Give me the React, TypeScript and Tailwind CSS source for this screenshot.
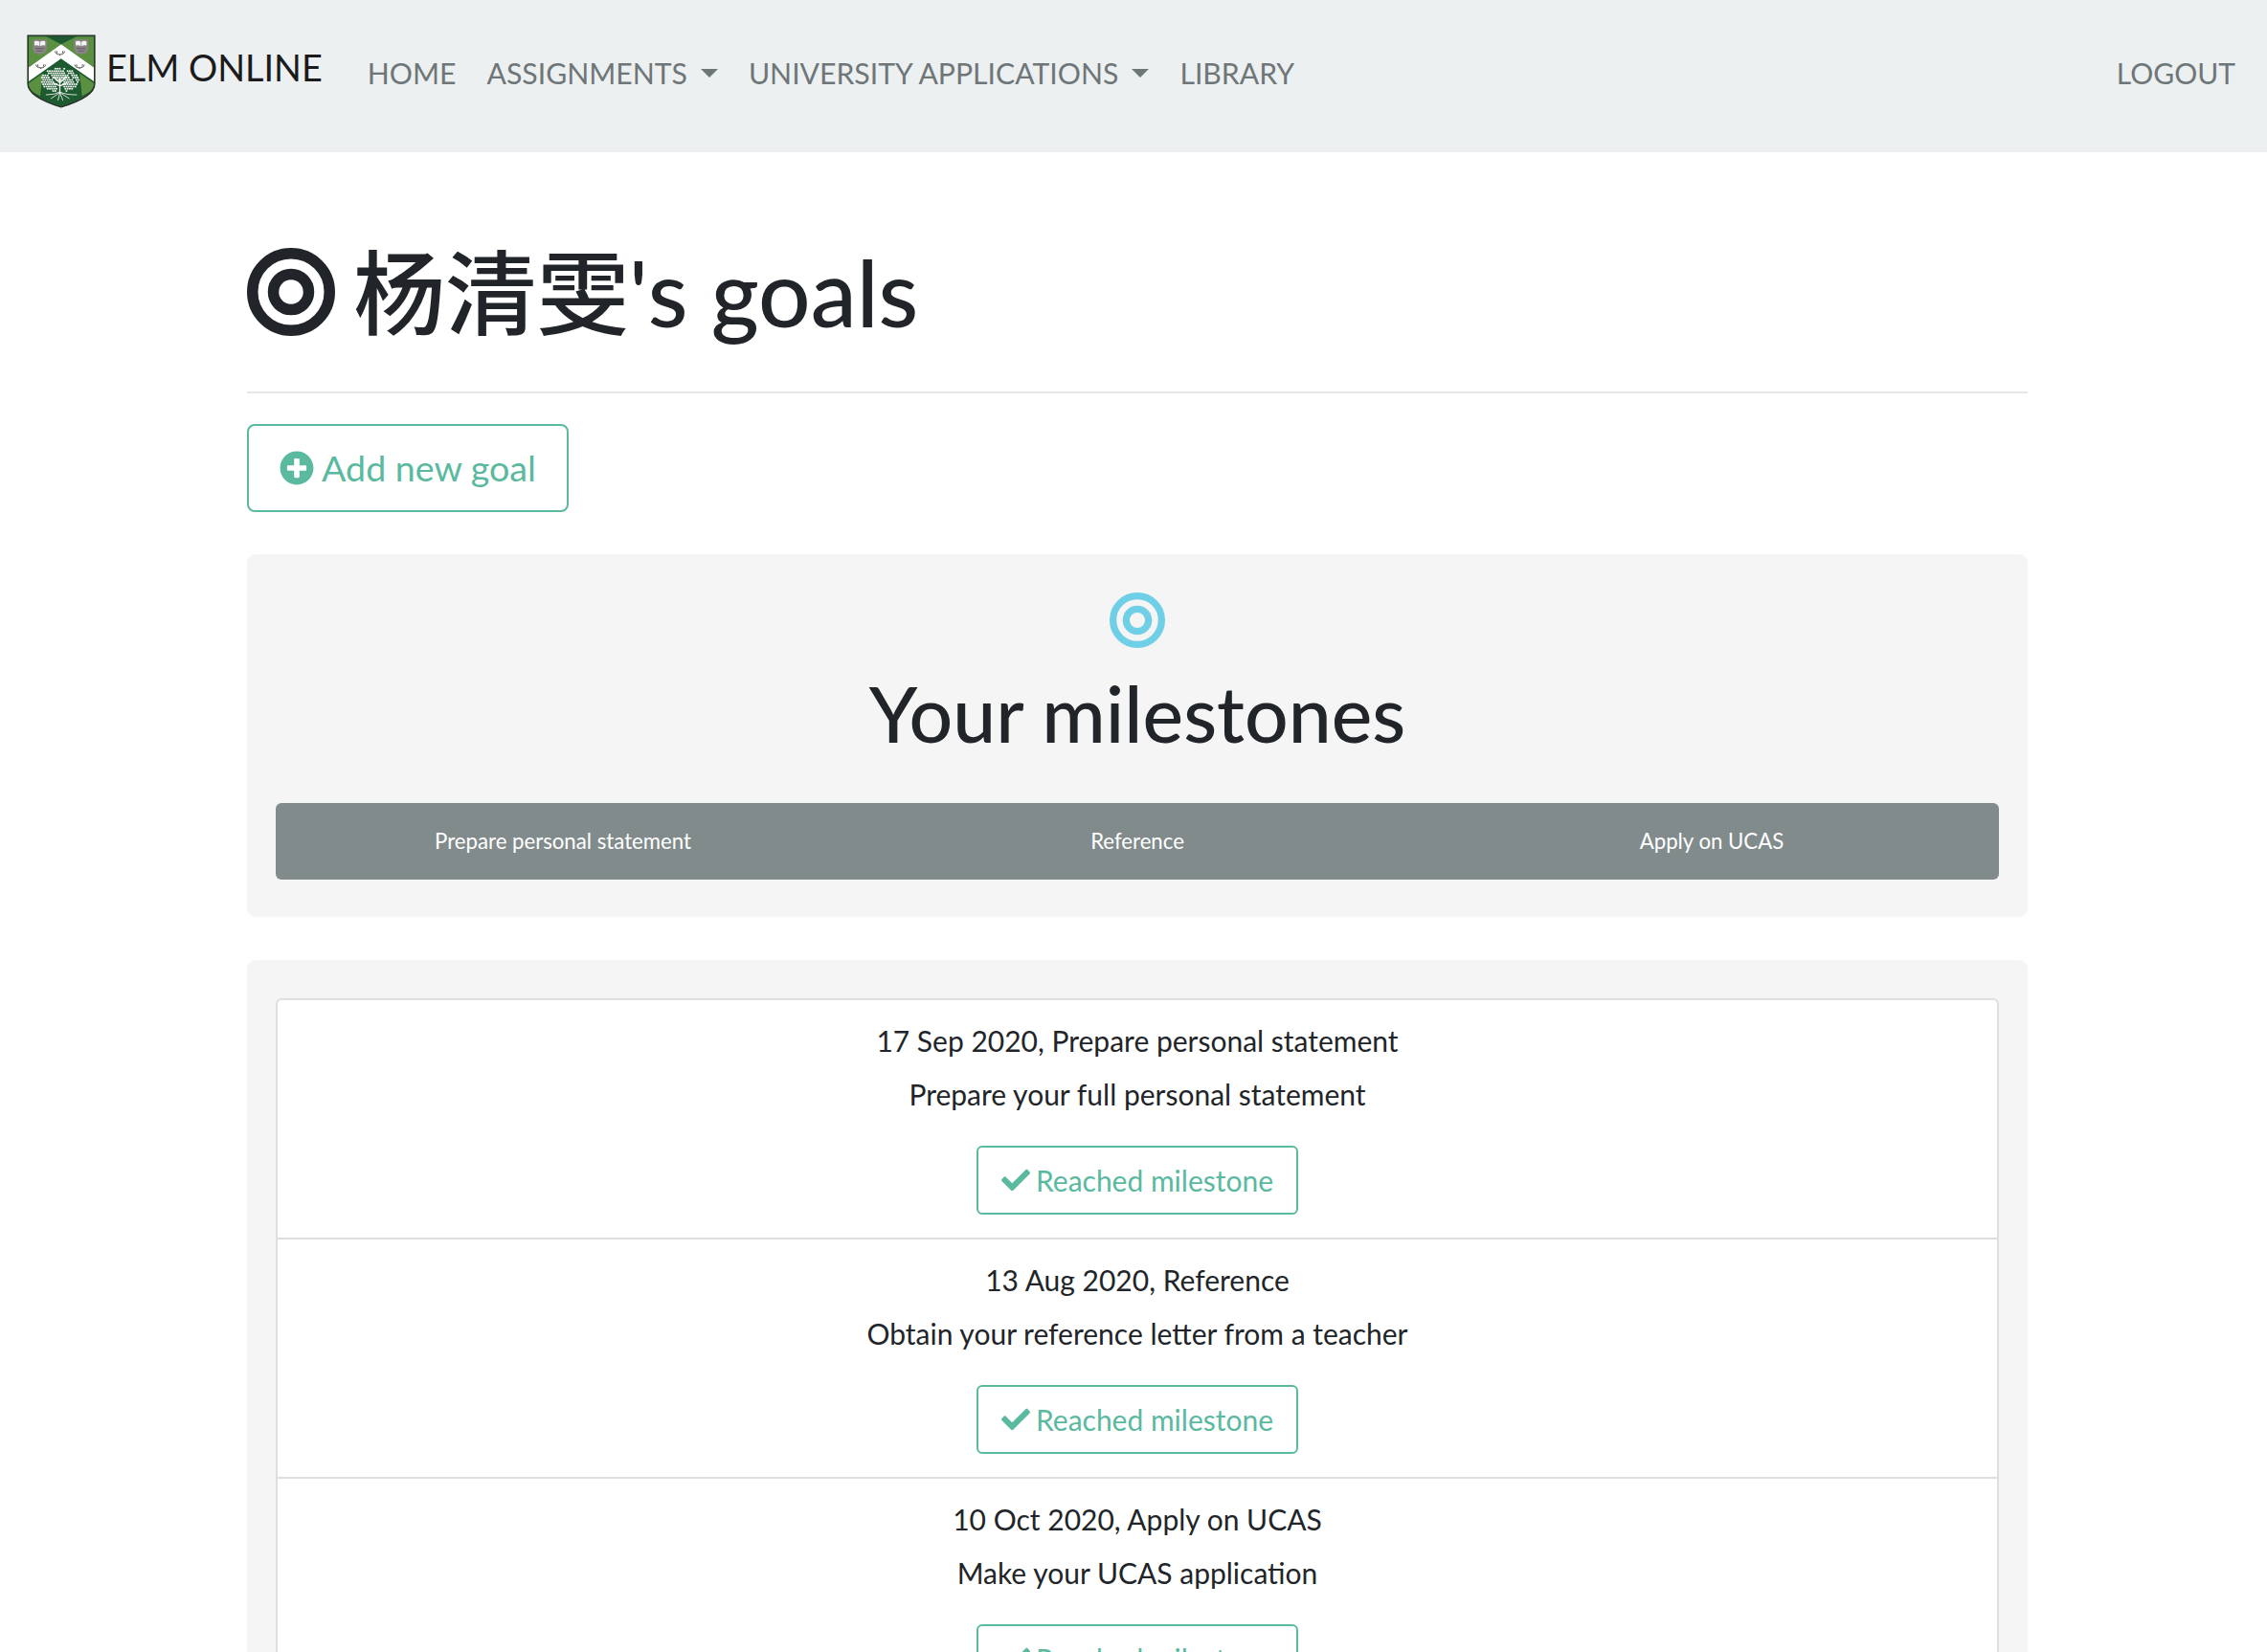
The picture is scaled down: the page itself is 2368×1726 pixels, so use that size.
import React from "react";
import { FaCheck, FaPlusCircle } from "react-icons/fa";

const font = { fontFamily: 'Lato, "Noto Sans CJK SC", sans-serif' };

function Bullseye({ className }: { className: string }) {
  return (
    <svg viewBox="0 0 96 96" className={className} fill="none" stroke="currentColor">
      <circle cx="48" cy="48" r="42" strokeWidth="12" />
      <circle cx="48" cy="48" r="19.3" strokeWidth="12" />
    </svg>
  );
}

function Owl({ x }: { x: number }) {
  return (
    <g>
      <path d={`M${x} 40h44v28c0 12-10 18-22 18s-22-6-22-18z`} fill="#8a8486" />
      <path d={`M${x + 5} 46q8-4 17 2q9-6 17-2v13q-8-3-17 2q-9-5-17-2z`} fill="#f4f4f4" />
      <path d={`M${x + 22} 48v13`} stroke="#555" strokeWidth="1.5" />
      <path d={`M${x + 8} 68h28M${x + 12} 76h20`} stroke="#5f5a5c" strokeWidth="2.5" />
    </g>
  );
}

function Antler({ x, y }: { x: number; y: number }) {
  return <path d={`M${x - 15} ${y - 6}q1 10 15 10q14 0 15-10M${x - 8} ${y}l-2-7M${x + 8} ${y}l2-7M${x} ${y + 4}v4`} stroke="#3a3a36" strokeWidth="2.5" fill="none" />;
}

function Logo() {
  const dots = [];
  for (let row = 0; row < 11; row++) {
    for (let col = 0; col < 17; col++) {
      const x = 72 + col * 7 + (row % 2) * 3.5;
      const y = 132 + row * 7;
      const dx = (x - 128) / 60;
      const dy = (y - 168) / 38;
      const gap = (row * 7 + col * 11) % 9 === 0 || (y > 172 && Math.abs(x - 128) < 10);
      if (dx * dx + dy * dy <= 1 && !gap) dots.push(<circle key={`${row}-${col}`} cx={x} cy={y} r="3.1" fill="#f7f7f7" />);
    }
  }
  return (
    <svg viewBox="24 24 217 232" className="w-[72px] h-[77px] shrink-0">
      <path d="M27 27H238V180C238 215 175 240 132 253C90 240 27 215 27 180Z" fill="#1d5a2f" stroke="#2b2522" strokeWidth="3.5" />
      <path d="M30 31H85L132 55L30 128ZM235 31H180L132 55L235 128Z" fill="#5a9040" />
      <path d="M30 178L74 146L66 218C45 208 30 195 30 180ZM235 178L190 146L198 218C220 208 235 195 235 180Z" fill="#5a9040" />
      <path d="M30 128L132 55L235 128V172L132 100L30 172Z" fill="#fff" />
      <Owl x={43} />
      <Owl x={173} />
      <Antler x={128} y={83} />
      <Antler x={68} y={125} />
      <Antler x={190} y={125} />
      {dots}
      <path d="M128 160V208M128 176L108 158M128 176L150 156M128 186L105 176M128 186L152 176" stroke="#f7f7f7" strokeWidth="4" fill="none" />
      <path d="M128 205Q112 214 84 214M128 205Q146 214 182 214M128 207L100 226M128 207L158 226M128 208L122 232M128 208L138 232" stroke="#f7f7f7" strokeWidth="2.5" fill="none" />
    </svg>
  );
}

function Caret() {
  return <span className="inline-block ml-[14px] w-0 h-0 border-x-[9px] border-x-transparent border-t-[9px] border-t-[#6f7678]" />;
}

function MilestoneItem({ title, desc, last }: { title: string; desc: string; last?: boolean }) {
  return (
    <div className={`flex flex-col items-center pt-[20px] h-[250px] text-[30px] leading-[45px] text-[#212529] ${last ? "" : "border-b-2 border-[#dfdfdf]"}`}>
      <p className="mb-[11px]">{title}</p>
      <p className="mb-[31px]">{desc}</p>
      <button className="flex items-center justify-center w-[336px] h-[72px] shrink-0 border-2 border-[#5ab99f] rounded-[6px] text-[#5ab99f] text-[30px]">
        <FaCheck className="w-[30px] h-[30px] mr-[6px]" />
        Reached milestone
      </button>
    </div>
  );
}

export default function App() {
  return (
    <div className="h-[1726px] overflow-hidden bg-white" style={font}>
      <nav className="flex items-center h-[159px] bg-[#ecf0f1] pl-[28px] pr-[33px] pb-[6px]">
        <div className="flex items-center -mt-[4px]">
          <Logo />
          <span className="ml-[11px] pb-[6px] text-[37.8px] text-[#1b1b1b]">ELM ONLINE</span>
        </div>
        <div className="flex items-center ml-[47px] gap-[32px] text-[30.2px] text-[#6f7678]">
          <span>HOME</span>
          <span className="flex items-center">ASSIGNMENTS<Caret /></span>
          <span className="flex items-center">UNIVERSITY APPLICATIONS<Caret /></span>
          <span>LIBRARY</span>
        </div>
        <span className="ml-auto text-[30px] text-[#6f7678]">LOGOUT</span>
      </nav>

      <main className="w-[1860px] ml-[258px]">
        <h1 className="flex items-center pt-[90px] h-[252px] text-[96px] font-medium text-[#212529] pb-[50px]">
          <Bullseye className="w-[92px] h-[92px] mr-[19px] text-[#212529]" />
          <span>杨清雯's goals</span>
        </h1>
        <hr className="border-t-2 border-[#e7e7e7] mt-[-2px]" />
        <button className="flex items-center justify-center mt-[32px] w-[336px] h-[92px] border-2 border-[#5ab99f] rounded-[8px] text-[#5ab99f] text-[37.6px]">
          <FaPlusCircle className="w-[36px] h-[36px] mr-[8px]" />
          Add new goal
        </button>

        <section className="mt-[44px] h-[379px] bg-[#f5f5f5] rounded-[9px] px-[30px] flex flex-col items-center">
          <Bullseye className="mt-[40px] w-[58px] h-[58px] text-[#6fcfe6]" />
          <h2 className="mt-[20px] text-[80.4px] leading-[96px] font-medium text-[#212529]">Your milestones</h2>
          <div className="mt-[46px] w-full h-[80px] grid grid-cols-3 items-center text-center rounded-[6px] bg-[#818b8c] text-white text-[22.2px]">
            <span>Prepare personal statement</span>
            <span>Reference</span>
            <span>Apply on UCAS</span>
          </div>
        </section>

        <section className="mt-[45px] bg-[#f5f5f5] rounded-[9px] px-[30px] pt-[40px] h-[800px]">
          <div className="bg-white border-2 border-[#dfdfdf] rounded-[6px]">
            <MilestoneItem title="17 Sep 2020, Prepare personal statement" desc="Prepare your full personal statement" />
            <MilestoneItem title="13 Aug 2020, Reference" desc="Obtain your reference letter from a teacher" />
            <MilestoneItem title="10 Oct 2020, Apply on UCAS" desc="Make your UCAS application" last />
          </div>
        </section>
      </main>
    </div>
  );
}
